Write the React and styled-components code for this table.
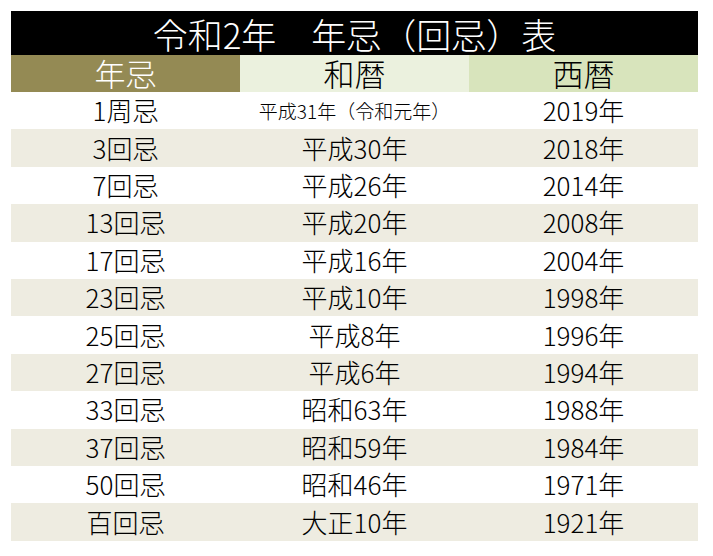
import React from 'react';
import styled, { createGlobalStyle } from 'styled-components';

const GlobalStyle = createGlobalStyle`
  body {
    margin: 0;
    background: #fff;
    font-family: 'Noto Sans CJK JP', 'Noto Sans', sans-serif;
    font-weight: 300;
  }
`

const Page = styled.div`
  padding: 11px 0 0 11px;
`

const Table = styled.div`
  width: 687px;
  display: flex;
  flex-direction: column;
`

const TitleBar = styled.div`
  height: 44px;
  background: #000;
  color: #fff;
  font-size: 35px;
  line-height: 1;
  display: flex;
  align-items: center;
  justify-content: center;
`

const Grid = styled.div`
  display: grid;
  grid-template-columns: 229px 229px 229px;
  height: ${props => props.height}px;
  background: ${props => props.bg || '#fff'};
`

const HeadCell = styled.div`
  display: flex;
  align-items: center;
  justify-content: center;
  background: ${props => props.bg};
  color: ${props => props.color};
  font-size: 31px;
  line-height: 1;
  padding-bottom: 2px;
`

const Cell = styled.div`
  display: flex;
  align-items: center;
  justify-content: center;
  color: #000;
  font-size: ${props => props.small ? 19 : 26}px;
  line-height: 1;
  padding-bottom: 1px;
`

const rows = [
  ['1周忌', '平成31年（令和元年）', '2019年'],
  ['3回忌', '平成30年', '2018年'],
  ['7回忌', '平成26年', '2014年'],
  ['13回忌', '平成20年', '2008年'],
  ['17回忌', '平成16年', '2004年'],
  ['23回忌', '平成10年', '1998年'],
  ['25回忌', '平成8年', '1996年'],
  ['27回忌', '平成6年', '1994年'],
  ['33回忌', '昭和63年', '1988年'],
  ['37回忌', '昭和59年', '1984年'],
  ['50回忌', '昭和46年', '1971年'],
  ['百回忌', '大正10年', '1921年'],
]

function App() {
  return (
    <>
      <GlobalStyle/>
      <Page>
        <Table>
          <TitleBar>令和2年　年忌（回忌）表</TitleBar>
          <Grid height={37}>
            <HeadCell bg="#948A54" color="#fff">年忌</HeadCell>
            <HeadCell bg="#EBF1DE" color="#000">和暦</HeadCell>
            <HeadCell bg="#D8E4BC" color="#000">西暦</HeadCell>
          </Grid>
          {rows.map((row, i) =>
            <Grid key={row[0]} height={37.42} bg={i % 2 == 1 ? '#EEECE1' : '#fff'}>
              <Cell>{row[0]}</Cell>
              <Cell small={row[1].length > 6}>{row[1]}</Cell>
              <Cell>{row[2]}</Cell>
            </Grid>
          )}
        </Table>
      </Page>
    </>
  )
}

export default App;
